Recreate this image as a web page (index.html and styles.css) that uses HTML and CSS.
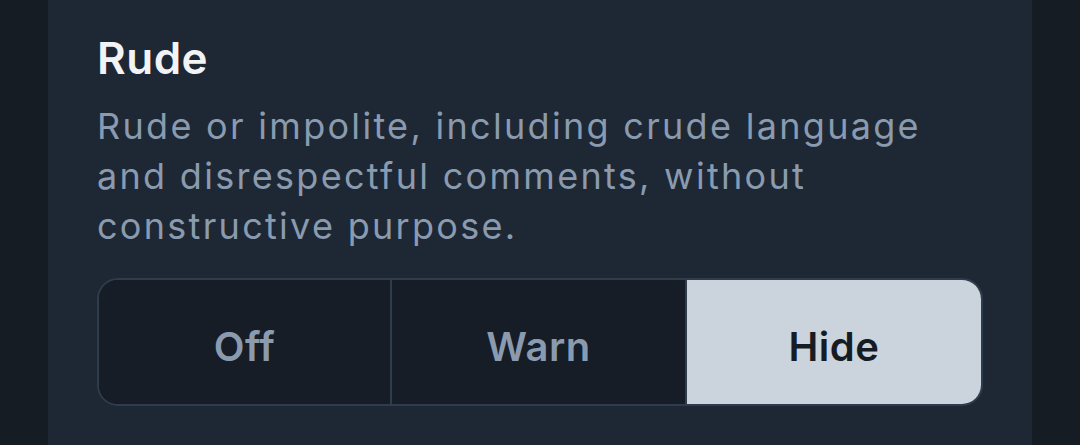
FILE: index.html
```html
<!DOCTYPE html>
<html>
<head>
<meta charset="utf-8">
<link rel="stylesheet" href="styles.css">
</head>
<body>
<div class="page">
  <section class="panel">
    <h2 class="title">Rude</h2>
    <p class="desc">Rude or impolite, including crude language and disrespectful comments, without constructive purpose.</p>
    <div class="segmented">
      <button class="seg">Off</button>
      <button class="seg">Warn</button>
      <button class="seg active">Hide</button>
    </div>
  </section>
</div>
</body>
</html>
```
FILE: styles.css
```css
* { box-sizing: border-box; }
html, body { margin: 0; padding: 0; }
body {
  background: #161c24;
  font-family: Inter, "Noto Sans", sans-serif;
  width: 1080px;
  height: 445px;
  overflow: hidden;
}
.page {
  padding: 0 48px;
  height: 445px;
}
.panel {
  background: #1e2834;
  height: 445px;
  padding: 32px 49px 0 49px;
}
.title {
  margin: 0;
  font-size: 44px;
  font-weight: 600;
  line-height: 52px;
  letter-spacing: 0.5px;
  color: #f1f3f5;
}
.desc {
  margin: 17px 0 0 0;
  font-size: 36px;
  line-height: 50px;
  letter-spacing: 2.3px;
  color: #8a9bb0;
}
.segmented {
  margin-top: 27px;
  display: grid;
  grid-template-columns: 291fr 295fr 296fr;
  height: 128px;
  border: 2px solid #2f3c4d;
  border-radius: 21px;
  overflow: hidden;
  background: #161d26;
}
.seg {
  border: none;
  background: #161d26;
  font-family: inherit;
  font-size: 40px;
  font-weight: 600;
  letter-spacing: 0.5px;
  color: #8a9bb0;
  padding: 8px 0 0 0;
}
.seg + .seg { border-left: 2px solid #2f3c4d; }
.seg.active {
  background: #cbd3dd;
  color: #161c24;
}
```
